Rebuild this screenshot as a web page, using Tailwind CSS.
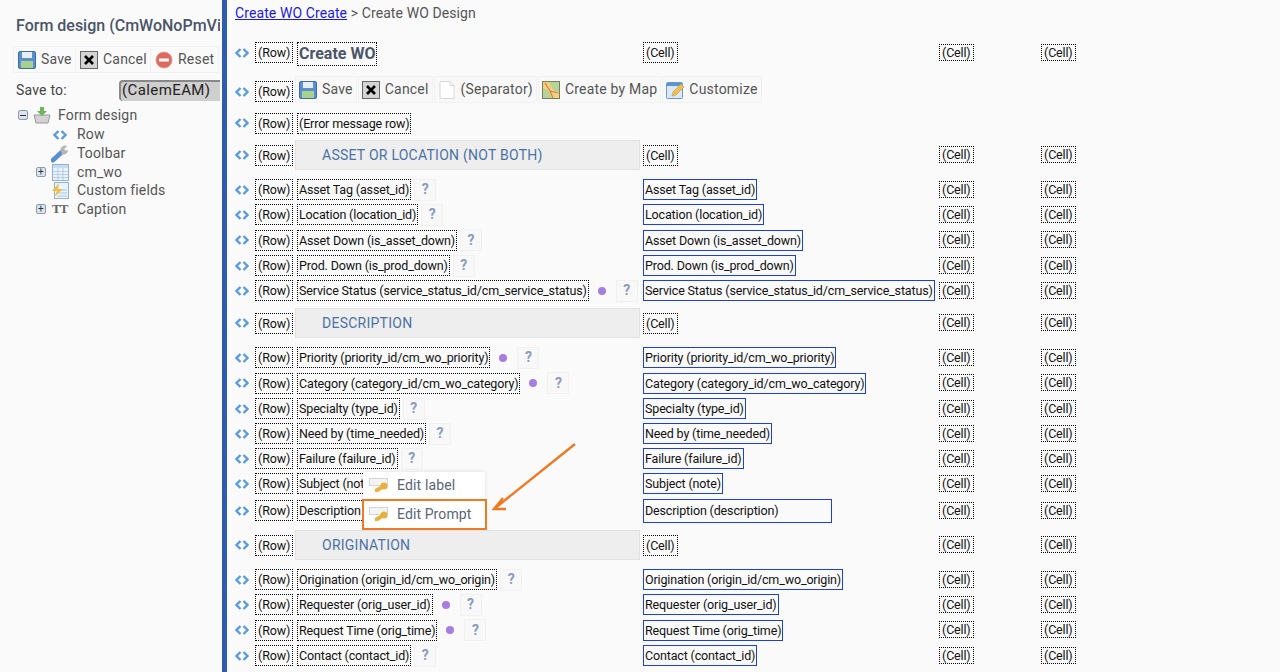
<!DOCTYPE html>
<html lang="en">
<head>
<meta charset="UTF-8" />
<title>Create WO Design</title>
<script src="https://cdn.jsdelivr.net/npm/@tailwindcss/browser@4"></script>
</head>
<body class="bg-[#fafafa] font-['Roboto',sans-serif] text-[#111] overflow-hidden">
<svg class="hidden">
  <symbol id="arrows" viewBox="0 0 14 10"><path d="M5.5 1 1.5 5l4 4M8.5 1l4 4-4 4" fill="none" stroke="#5a9be0" stroke-width="2.4"/></symbol>
  <symbol id="save" viewBox="0 0 18 18"><rect x=".5" y=".5" width="17" height="17" rx="1.5" fill="#5b8fd0" stroke="#3c6cab"/><rect x="4" y="1" width="10" height="6" fill="#e8eef6"/><rect x="3" y="10" width="12" height="7" fill="#a9d18e"/></symbol>
  <symbol id="cancel" viewBox="0 0 18 18"><rect x=".5" y=".5" width="17" height="17" fill="#d4d4d4" stroke="#666"/><path d="M5 5l8 8M13 5l-8 8" stroke="#000" stroke-width="2.6"/></symbol>
  <symbol id="reset" viewBox="0 0 18 18"><circle cx="9" cy="9" r="8" fill="#e2685c" stroke="#d8a09a"/><rect x="4" y="7.5" width="10" height="3" fill="#fff"/></symbol>
  <symbol id="doc" viewBox="0 0 18 18"><path d="M2 .5h10l4 4v13H2z" fill="#fff" stroke="#d8d8d8"/><path d="M12 .5v4h4" fill="none" stroke="#d8d8d8"/></symbol>
  <symbol id="map" viewBox="0 0 18 18"><rect x=".5" y=".5" width="17" height="17" fill="#b7d39a" stroke="#6f7f62"/><path d="M1 1h6l4 8 6 3v5H10L6 9 1 7z" fill="#f3d27a"/><path d="M3 2l5 8 3 7M8 10l8 2" fill="none" stroke="#e07a4f" stroke-width="1.2"/></symbol>
  <symbol id="custom" viewBox="0 0 18 18"><rect x=".5" y="1.5" width="16" height="16" rx="1" fill="#dbe8f7" stroke="#6b98d0"/><rect x="1" y="2" width="15" height="3" fill="#5d93d6"/><path d="M6 15l1-4 8-8 3 3-8 8z" fill="#eec04f" stroke="#c99a35" stroke-width=".6"/></symbol>
  <symbol id="key" viewBox="0 0 20 16"><rect x=".5" y=".5" width="18" height="7" fill="#f4f4f4" stroke="#d4d4d4"/><circle cx="15" cy="8" r="3.6" fill="#e6b13f"/><path d="M13 7 6 11v3h3l6-4" fill="#e6b13f"/></symbol>
  <symbol id="basket" viewBox="0 0 18 18"><path d="M1 9h16l-2 8H3z" fill="#d3d3d3" stroke="#9a9a9a"/><path d="M7 1h4v4h3l-5 5-5-5h3z" fill="#6fb45f"/></symbol>
  <symbol id="wrench" viewBox="0 0 20 20"><path d="M2 17 12 8" stroke="#5b8fd0" stroke-width="5" stroke-linecap="round"/><path d="M10 7a5 5 0 0 1 7-5l-3 3 1 2 3-1a5 5 0 0 1-6 5z" fill="#b5b5b5"/></symbol>
  <symbol id="table" viewBox="0 0 17 17"><rect x=".5" y=".5" width="16" height="16" fill="#eaf2fb" stroke="#8fb2da"/><rect x="1" y="1" width="15" height="3" fill="#c6dbf2"/><path d="M1 7.5h15M1 10.5h15M1 13.5h15M6 4v12M11 4v12" stroke="#a9c4e2" stroke-width=".8"/></symbol>
  <symbol id="fields" viewBox="0 0 18 17"><rect x="3.5" y=".5" width="14" height="16" fill="#eaf2fb" stroke="#8fb2da"/><path d="M6 8h10M6 11h10M6 14h10" stroke="#a9c4e2"/><path d="M8 1 1 9h5l-3 6 9-8H7z" fill="#efc13f"/></symbol>
</svg>

<div class="flex h-[672px] relative">
  <aside class="w-[222px] shrink-0 overflow-hidden">
    <div class="pl-4 pt-[14px] h-[46px] text-[16px] font-medium text-[#4a5568] whitespace-nowrap overflow-hidden w-[220px]">Form design (CmWoNoPmView)</div>
    <div class="flex ml-[13px] h-[27px] w-[206px] gap-px bg-[#f1f1f1] border border-[#f1f1f1] text-[14px] text-[#555] tracking-[0.2px]">
      <div class="flex items-center gap-[5px] pl-1 w-[61px] bg-[#fafafa]"><svg class="w-[18px] h-[18px]"><use href="#save"/></svg>Save</div>
      <div class="flex items-center gap-[5px] pl-1 w-[74px] bg-[#fafafa]"><svg class="w-[18px] h-[18px]"><use href="#cancel"/></svg>Cancel</div>
      <div class="flex items-center gap-[5px] pl-1 flex-1 bg-[#fafafa]"><svg class="w-[18px] h-[18px]"><use href="#reset"/></svg>Reset</div>
    </div>
    <div class="flex items-center h-[29px] mt-[3px] pl-4 w-[220px] overflow-hidden text-[14px] text-[#444]">
      <span class="w-[103px] shrink-0 tracking-[0.2px]">Save to:</span>
      <span class="h-[21px] w-[110px] shrink-0 bg-[#cfcfcf] border-l-2 border-t-2 border-[#888] rounded-l-sm pl-px text-[15px] leading-[17px] text-[#222] tracking-[0.4px]">(CalemEAM)</span>
    </div>
    <div class="text-[14px] text-[#555] tracking-[0.15px]">
      <div class="flex items-center h-[20px] pl-[18px]"><span class="w-[10px] h-[10px] mr-[5px] border border-[#8a9ab0] rounded-[2px] bg-[#dbe3ee] flex items-center justify-center"><span class="w-[6px] h-px bg-[#333]"></span></span><svg class="w-[18px] h-[18px] mr-[7px]"><use href="#basket"/></svg>Form design</div>
      <div class="flex items-center h-[19px] pl-[53px]"><svg class="w-[14px] h-[10px] mr-[10px]"><use href="#arrows"/></svg>Row</div>
      <div class="flex items-center h-[19px] pl-[51px]"><svg class="w-[19px] h-[19px] mr-[7px]"><use href="#wrench"/></svg>Toolbar</div>
      <div class="flex items-center h-[18px] pl-[36px]"><span class="w-[10px] h-[10px] mr-[6px] border border-[#8a9ab0] rounded-[2px] bg-[#dbe3ee] flex items-center justify-center text-[10px] leading-none text-[#333]">+</span><svg class="w-[17px] h-[17px] mr-[8px]"><use href="#table"/></svg>cm_wo</div>
      <div class="flex items-center h-[19px] pl-[51px]"><svg class="w-[18px] h-[17px] mr-[8px]"><use href="#fields"/></svg>Custom fields</div>
      <div class="flex items-center h-[18px] pl-[36px]"><span class="w-[10px] h-[10px] mr-[6px] border border-[#8a9ab0] rounded-[2px] bg-[#dbe3ee] flex items-center justify-center text-[10px] leading-none text-[#333]">+</span><span class="w-[17px] mr-[8px] font-['Liberation_Serif',serif] font-bold text-[13px] text-[#666] tracking-[-1px]">TT</span>Caption</div>
    </div>
  </aside>

  <div class="w-[5px] shrink-0 bg-[#2e5cb0]"></div>

  <main class="flex-1 pl-[8px]">
    <div class="h-[32px] pt-[3px] text-[14px] text-[#555] tracking-[0.1px]"><a class="text-[#1a1ae0] underline" href="#">Create WO Create</a> &gt; Create WO Design</div>
    <div id="rows"></div>
  </main>

  <!-- context menu over the Subject and Description rows -->
  <div class="absolute left-[363px] top-[472px] w-[122px] h-[27px] bg-white shadow-[0_0_4px_rgba(0,0,0,0.12)] flex items-center pl-[6px] text-[14px] text-[#5a6578] tracking-[0.15px]"><svg class="w-[20px] h-[16px] mr-[8px]"><use href="#key"/></svg>Edit label</div>
  <div class="absolute left-[362px] top-[499px] w-[125px] h-[31px] bg-white border-2 border-[#f07a22] flex items-center pl-[5px] text-[14px] text-[#5a6578] tracking-[0.1px]"><svg class="w-[20px] h-[16px] mr-[8px]"><use href="#key"/></svg>Edit Prompt</div>
  <svg class="absolute left-[490px] top-[440px] w-[92px] h-[76px]" viewBox="0 0 92 76"><path d="M85 4 4 69M13 58 4 69l12 0" fill="none" stroke="#f07a22" stroke-width="2.4"/></svg>
</div>

<script>
  // toolbar row, title row and section headers are special, the rest are field rows
  const rows = [
    { h: "h-[41px]", title: "Create WO" },
    { h: "h-[37px]", toolbar: true },
    { h: "h-[26px]", error: true },
    { h: "h-[38px]", section: "ASSET OR LOCATION (NOT BOTH)" },
    { h: "h-[3px]", gap: true },
    { h: "h-[25px]", label: "Asset Tag (asset_id)" },
    { h: "h-[25px]", label: "Location (location_id)" },
    { h: "h-[26px]", label: "Asset Down (is_asset_down)" },
    { h: "h-[25px]", label: "Prod. Down (is_prod_down)" },
    { h: "h-[25px]", label: "Service Status (service_status_id/cm_service_status)", req: true },
    { h: "h-[40px]", section: "DESCRIPTION" },
    { h: "h-[2px]", gap: true },
    { h: "h-[25px]", label: "Priority (priority_id/cm_wo_priority)", req: true },
    { h: "h-[26px]", label: "Category (category_id/cm_wo_category)", req: true },
    { h: "h-[25px]", label: "Specialty (type_id)" },
    { h: "h-[25px]", label: "Need by (time_needed)" },
    { h: "h-[25px]", label: "Failure (failure_id)" },
    { h: "h-[25px]", label: "Subject (note)" },
    { h: "h-[29px]", label: "Description (description)", wide: true },
    { h: "h-[40px]", section: "ORIGINATION" },
    { h: "h-[2px]", gap: true },
    { h: "h-[25px]", label: "Origination (origin_id/cm_wo_origin)" },
    { h: "h-[25px]", label: "Requester (orig_user_id)", req: true },
    { h: "h-[26px]", label: "Request Time (orig_time)", req: true },
    { h: "h-[25px]", label: "Contact (contact_id)" },
  ];

  const box = "border border-dotted border-black";
  const cell = `<span class="${box} h-[21px] leading-[19px] px-[2px]">(Cell)</span>`;
  const tool = (icon, text) => `<span class="flex items-center gap-[5px] h-[27px] px-[3px] mr-px bg-[#f8f8f8] border border-[#f1f1f1] text-[14px] text-[#555] tracking-[0.2px] whitespace-nowrap"><svg class="w-[18px] h-[18px]"><use href="#${icon}"/></svg>${text}</span>`;
  const help = `<span class="ml-[3px] w-[22px] h-[22px] shrink-0 flex items-center justify-center bg-[#f8f8f8] border border-[#f1f1f1] font-bold text-[#8a9bc0] text-[14px]">?</span>`;
  const dot = `<span class="ml-[9px] mr-[7px] w-[8px] h-[8px] shrink-0 rounded-full bg-[#a67ee0]"></span>`;

  document.getElementById("rows").innerHTML = rows.map((r) => {
    if (r.gap) return `<div class="${r.h}"></div>`;
    let first = "", second = "";
    if (r.title) {
      first = `<span class="${box} h-[24px] leading-[22px] px-px mt-[2px] text-[16px] font-bold tracking-normal text-[#4a5568]">${r.title}</span>`;
      second = cell;
    } else if (r.toolbar) {
      first = `<div class="flex -ml-[2px] -mt-[4px]">${tool("save", "Save")}${tool("cancel", "Cancel")}${tool("doc", "(Separator)")}${tool("map", "Create by Map")}${tool("custom", "Customize")}</div>`;
    } else if (r.error) {
      first = `<span class="${box} h-[21px] leading-[19px] px-[1px]">(Error message row)</span>`;
    } else if (r.section) {
      first = `<div class="-ml-[2px] w-[345px] h-[30px] leading-[28px] pl-[26px] bg-[#eeeeee] border border-[#e2e2e2] text-[14px] text-[#4a72a8] tracking-[0.25px]">${r.section}</div>`;
      second = cell;
    } else {
      first = `<span class="${box} h-[21px] leading-[19px] px-[1px] whitespace-nowrap">${r.label}</span>${r.req ? dot : ""}${help}`;
      const size = r.wide ? "w-[189px] h-[24px] leading-[22px]" : "h-[21px] leading-[19px]";
      second = `<span class="border border-[#1c3fe0] ${size} px-[1px] whitespace-nowrap">${r.label}</span>`;
    }
    const tail = r.toolbar || r.error ? "" : `<div>${cell}</div><div>${cell}</div>`;
    return `<div class="${r.h} grid grid-cols-[20px_42px_346px_296px_102px_80px] items-center text-[12.5px] tracking-[-0.15px]">
      <svg class="w-[14px] h-[10px]"><use href="#arrows"/></svg>
      <div><span class="${box} inline-block h-[21px] leading-[19px] px-[2px]">(Row)</span></div>
      <div class="flex items-center ${r.toolbar ? "col-span-3" : ""}">${first}</div>
      ${r.toolbar ? "" : `<div class="flex items-center">${second}</div>`}
      ${r.toolbar ? "" : tail}
    </div>`;
  }).join("");
</script>
</body>
</html>
